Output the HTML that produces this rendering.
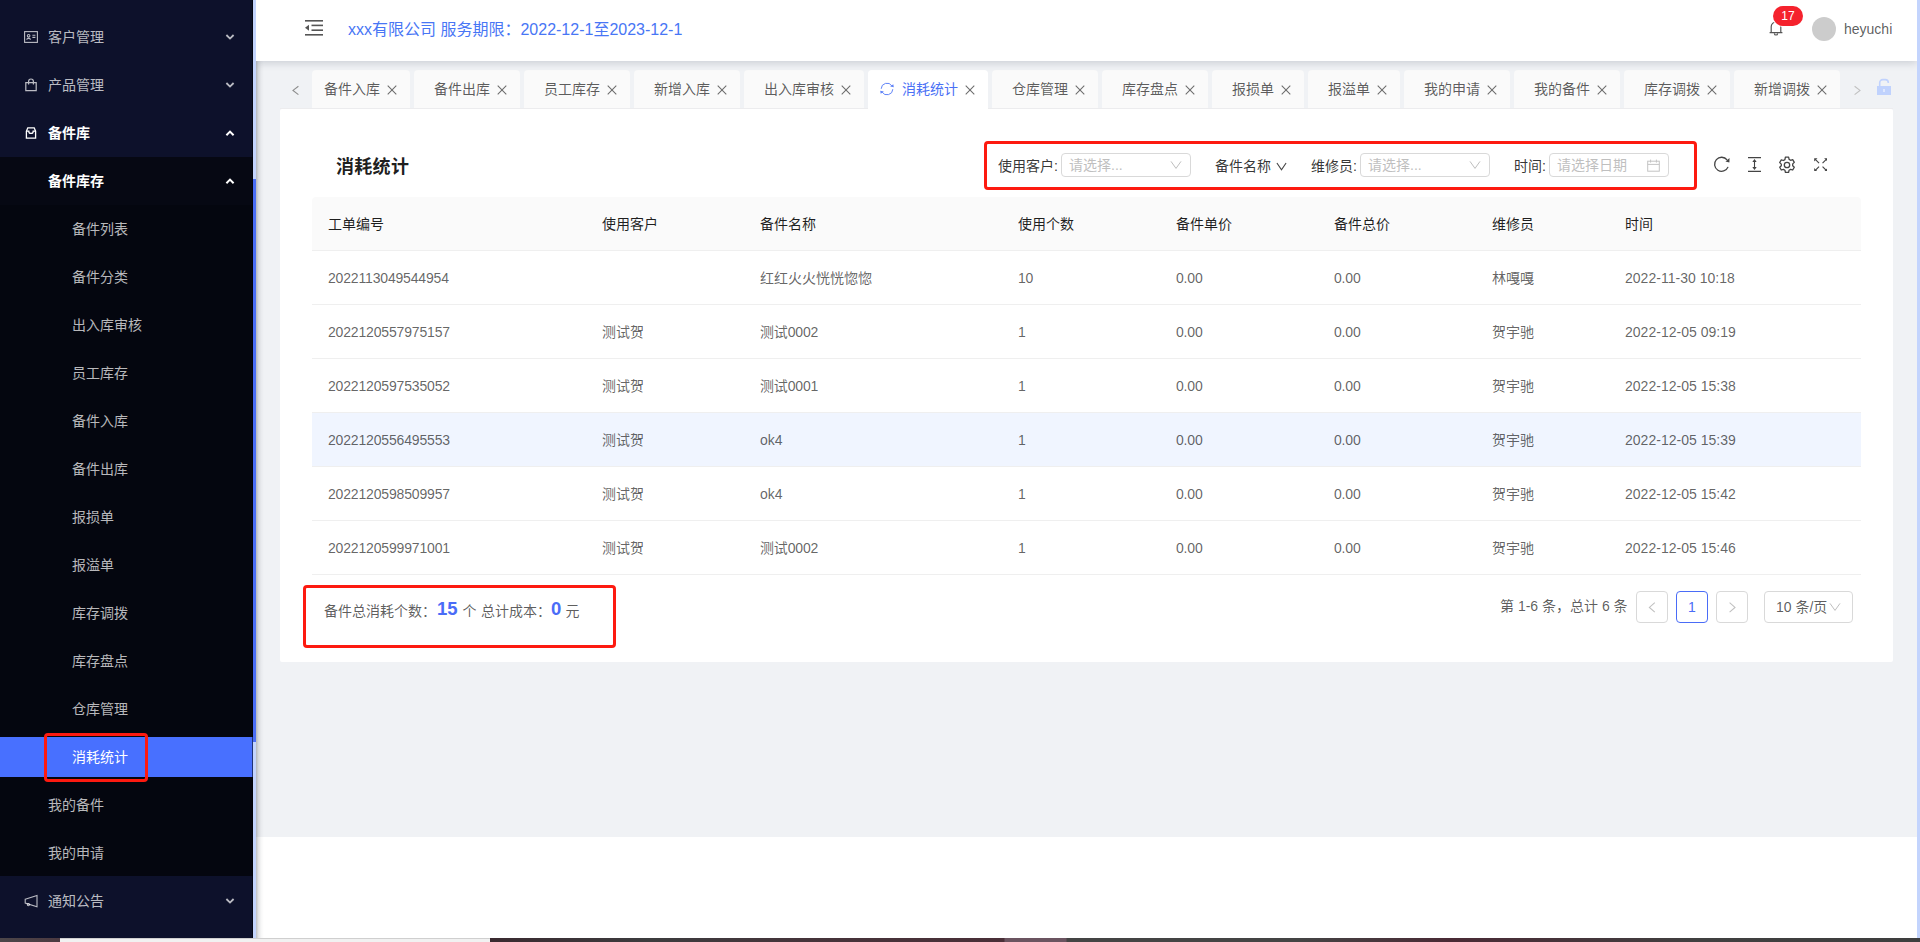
<!DOCTYPE html>
<html lang="zh-CN">
<head>
<meta charset="utf-8">
<title>消耗统计</title>
<style>
*{box-sizing:border-box;margin:0;padding:0}
html,body{width:1920px;height:942px;overflow:hidden;background:#fff}
body{position:relative;font-family:"Liberation Sans","Noto Sans CJK SC",sans-serif;font-size:14px;color:rgba(0,0,0,.65);line-height:1.5715}
.abs{position:absolute}
/* ---------- sidebar ---------- */
#side{position:absolute;left:0;top:0;width:253px;height:938px;background:#0d112b;overflow:hidden}
#side .subbg{position:absolute;left:0;top:157px;width:253px;height:719px;background:#04060f;border-top:48px solid #060813}
#side .mi{position:absolute;left:0;width:253px;height:40px;line-height:40px;color:rgba(255,255,255,.72);font-size:14px;white-space:nowrap}
#side .mi.l1{padding-left:48px}
#side .mi.l2{padding-left:48px}
#side .mi.l3{padding-left:72px}
#side .mi.on{color:#fff;font-weight:700}
#side .mi.sel{background:#4870ff;color:#fff}
#side .mi svg.ic{position:absolute;left:24px;top:13px;width:14px;height:14px}
#side .mi svg.ar{position:absolute;left:225px;top:15px;width:10px;height:10px}
#sedge{position:absolute;left:252px;top:0;width:1px;height:938px;background:rgba(0,0,0,.55)}
#strack{position:absolute;left:253px;top:0;width:3px;height:938px;background:#c3d4fd}
#sthumb{position:absolute;left:253px;top:179px;width:3px;height:563px;background:#4a6ef5}
/* ---------- header ---------- */
#main{position:absolute;left:256px;top:0;width:1661px;height:938px;background:#fff;overflow:hidden}
#gray{position:absolute;left:0;top:61px;width:1661px;height:776px;background:#f0f2f5}
#sshadow{position:absolute;left:0;top:61px;width:8px;height:877px;background:linear-gradient(to right,rgba(0,10,20,.25),rgba(0,10,20,.11) 30%,rgba(0,10,20,.03) 65%,rgba(0,10,20,0))}
#hdr{position:absolute;left:0;top:0;width:1661px;height:61px;background:#fff;box-shadow:0 2px 8px rgba(0,21,41,.16);z-index:5}
#rtrack{position:absolute;left:1917px;top:0;width:3px;height:938px;background:#c3d4fd}
#botstrip{position:absolute;left:0;top:938px;width:1920px;height:4px;background:linear-gradient(to right,#4b4649 0,#4c3a41 60px,#3a2a30 490px,#3c3c3e 650px,#45343a 800px,#4a2f38 1004px,#6b5460 1005px,#6b5460 1066px,#444 1067px,#444 1300px,#4a2a35 1450px,#404040 1700px,#3e3e3e 1920px)}
#botstrip i{position:absolute;left:60px;top:0;width:430px;height:4px;background:#f1f1f1;border-top:1px solid #cfcfcf}

#hdr .fold{position:absolute;left:49px;top:19px;width:18px;height:18px}
#hdr .co{position:absolute;left:92px;top:0;height:59px;line-height:59px;font-size:16px;color:#4876f5;white-space:nowrap}
#hdr .bell{position:absolute;left:1513px;top:20px;width:14px;height:16px}
#hdr .badge{position:absolute;left:1517px;top:6px;width:30px;height:20px;border-radius:10px;background:#f5222d;color:#fff;font-size:12px;line-height:21px;text-align:center;box-shadow:0 0 0 1px #fff}
#hdr .ava{position:absolute;left:1556px;top:17px;width:24px;height:24px;border-radius:50%;background:#ccc}
#hdr .nm{position:absolute;left:1588px;top:0;height:58px;line-height:58px;font-size:14px;color:rgba(0,0,0,.65)}
/* ---------- tabs ---------- */
#tabs{position:absolute;left:0;top:70px;width:1661px;height:39px}
#tabs .line{position:absolute;left:24px;top:38px;width:1613px;height:1px;background:#ececee}
#tabs .tb{position:absolute;top:0;height:38px;line-height:37px;background:#fafafa;border:1px solid #fafafa;border-bottom:0;border-radius:4px 4px 0 0;font-size:14px;color:rgba(0,0,0,.65);white-space:nowrap}
#tabs .tb span{position:absolute;top:0}
#tabs .tb svg.x{position:absolute;top:13px;width:12px;height:12px}
#tabs .tb.act{background:#fff;border-color:#fff;color:#4a70f5;height:39px}
#tabs .tb.act svg.sync{position:absolute;left:11px;top:11px;width:14px;height:14px}
#tabs .nav{position:absolute;top:14px;width:12px;height:12px}
#tabs .lock{position:absolute;left:1621px;top:8px;width:14px;height:17px}

/* ---------- card ---------- */
#card{position:absolute;left:24px;top:109px;width:1613px;height:553px;background:#fff;border-radius:2px}
#card .ttl{position:absolute;left:56px;top:44px;letter-spacing:.3px;font-size:18px;line-height:28px;font-weight:700;color:rgba(0,0,0,.88);white-space:nowrap}
.red{position:absolute;border:3px solid #fd1a10;border-radius:4px;z-index:9;pointer-events:none}
#card .lb{position:absolute;top:45px;height:24px;line-height:24px;font-size:14px;color:rgba(0,0,0,.8);white-space:nowrap}
#card .sel{position:absolute;top:44px;height:24px;border:1px solid #d9d9d9;border-radius:4px;background:#fff;line-height:22px;font-size:14px;color:#bfbfbf;padding-left:7px;white-space:nowrap}
#card .sel svg{position:absolute;top:5px;width:12px;height:12px}
#card .tool{position:absolute}
/* table */
#tbl{position:absolute;left:32px;top:88px;width:1549px}
#tbl .th{position:absolute;left:0;top:0;width:1549px;height:53px;background:#fafafa;border-radius:4px 4px 0 0}
#tbl .hl{position:absolute;left:0;width:1549px;height:1px;background:#efefef}
#tbl .hov{position:absolute;left:0;top:216px;width:1549px;height:53px;background:#f0f5ff}
#tbl .c{position:absolute;height:22px;line-height:22px;font-size:14px;white-space:nowrap;color:rgba(0,0,0,.62)}
#tbl .h{color:rgba(0,0,0,.88)}
#tbl .n{letter-spacing:-0.17px}
#tbl .d{letter-spacing:0.02px}
/* footer */
#sum{position:absolute;left:44px;top:488px;height:26px;width:280px;font-size:14px;color:rgba(0,0,0,.65);white-space:nowrap}
#sum span{position:absolute;top:3px;line-height:22px}
#sum b{position:absolute;top:-1px;line-height:26px;font-size:18.500px;color:#4a6cf7;font-weight:700}
#pg{position:absolute;top:482px;left:0;width:1613px;height:32px;font-size:14px;color:rgba(0,0,0,.65)}
#pg .t{position:absolute;left:1220px;top:0;line-height:30px;white-space:nowrap}
#pg .b{position:absolute;top:0;width:32px;height:32px;border:1px solid #d9d9d9;border-radius:4px;background:#fff;text-align:center;line-height:30px}
#pg .b svg{position:absolute;left:9px;top:9px;width:12px;height:12px}
#pg .b.a{border-color:#4a6cf7;color:#4a6cf7}
#pg .s{position:absolute;left:1484px;top:0;width:89px;height:32px;border:1px solid #d9d9d9;border-radius:4px;background:#fff;line-height:30px;padding-left:11px;white-space:nowrap}
#pg .s svg{position:absolute;left:64px;top:8.500px;width:12px;height:12px}
</style>
</head>
<body>
<div id="side">
  <div class="subbg"></div>
  <div class="mi l1 " style="top:17px"><svg class="ic" viewBox="0 0 14 14" fill="none" stroke="currentColor" stroke-width="1.1"><rect x="0.6" y="1.6" width="12.8" height="10.8"/><circle cx="4.6" cy="5.8" r="1.3"/><path d="M2.6 9.6c.3-1.6 3.7-1.6 4 0M8.4 5.2h3M8.4 7.4h3"/></svg><span>客户管理</span><svg class="ar" viewBox="0 0 10 10" fill="none" stroke="currentColor" stroke-width="1.800"><path d="M1.400 3l3.600 3.600L8.600 3"/></svg></div>
  <div class="mi l1 " style="top:65px"><svg class="ic" viewBox="0 0 14 14" fill="none" stroke="currentColor" stroke-width="1.2"><path d="M1.8 4.6h10.4v8H1.8zM4.6 6.4V3.4a2.4 2.4 0 0 1 4.8 0v3"/></svg><span>产品管理</span><svg class="ar" viewBox="0 0 10 10" fill="none" stroke="currentColor" stroke-width="1.800"><path d="M1.400 3l3.600 3.600L8.600 3"/></svg></div>
  <div class="mi l1 on" style="top:113px"><svg class="ic" viewBox="0 0 14 14" fill="none" stroke="currentColor" stroke-width="1.3"><path d="M2.4 5.2 3.8 1.8h6.4l1.4 3.4v7H2.4z"/><path d="M2.4 5.2h2.4c0 3 4.4 3 4.400 0h2.400"/></svg><span>备件库</span><svg class="ar" viewBox="0 0 10 10" fill="none" stroke="currentColor" stroke-width="2"><path d="M1.400 7.200 5 3.600l3.600 3.600"/></svg></div>
  <div class="mi l2 on" style="top:161px"><span>备件库存</span><svg class="ar" viewBox="0 0 10 10" fill="none" stroke="currentColor" stroke-width="2"><path d="M1.400 7.200 5 3.600l3.600 3.600"/></svg></div>
  <div class="mi l3 " style="top:209px"><span>备件列表</span></div>
  <div class="mi l3 " style="top:257px"><span>备件分类</span></div>
  <div class="mi l3 " style="top:305px"><span>出入库审核</span></div>
  <div class="mi l3 " style="top:353px"><span>员工库存</span></div>
  <div class="mi l3 " style="top:401px"><span>备件入库</span></div>
  <div class="mi l3 " style="top:449px"><span>备件出库</span></div>
  <div class="mi l3 " style="top:497px"><span>报损单</span></div>
  <div class="mi l3 " style="top:545px"><span>报溢单</span></div>
  <div class="mi l3 " style="top:593px"><span>库存调拨</span></div>
  <div class="mi l3 " style="top:641px"><span>库存盘点</span></div>
  <div class="mi l3 " style="top:689px"><span>仓库管理</span></div>
  <div class="mi l3 sel" style="top:737px"><span>消耗统计</span></div>
  <div class="mi l2 " style="top:785px"><span>我的备件</span></div>
  <div class="mi l2 " style="top:833px"><span>我的申请</span></div>
  <div class="mi l1 " style="top:881px"><svg class="ic" viewBox="0 0 14 14" fill="none" stroke="currentColor" stroke-width="1.1"><path d="M1.200 5.200 13 1.400v11.400L1.200 9z"/><circle cx="4.400" cy="10.600" r="1.100"/></svg><span>通知公告</span><svg class="ar" viewBox="0 0 10 10" fill="none" stroke="currentColor" stroke-width="1.800"><path d="M1.400 3l3.600 3.600L8.600 3"/></svg></div>
</div>
<div id="sedge"></div><div id="strack"></div><div id="sthumb"></div>
<div id="main">
  <div id="gray"></div>
  <div id="tabs">
    <div class="line"></div>
    <svg class="nav" style="left:34px" viewBox="0 0 12 12" fill="none" stroke="#8c8c8c" stroke-width="1.1"><path d="M8.400 2.200 3 6.400l5.400 4.200"/></svg>
    <div class="tb" style="left:56px;width:98px"><span style="left:11px">备件入库</span><svg class="x" style="left:73px" viewBox="0 0 12 12" fill="none" stroke="#6c6c6c" stroke-width="1.050"><path d="M1.700 1.700l8.600 8.600M10.300 1.700l-8.600 8.600"/></svg></div>
    <div class="tb" style="left:158px;width:106px"><span style="left:19px">备件出库</span><svg class="x" style="left:81px" viewBox="0 0 12 12" fill="none" stroke="#6c6c6c" stroke-width="1.050"><path d="M1.700 1.700l8.600 8.600M10.300 1.700l-8.600 8.600"/></svg></div>
    <div class="tb" style="left:268px;width:106px"><span style="left:19px">员工库存</span><svg class="x" style="left:81px" viewBox="0 0 12 12" fill="none" stroke="#6c6c6c" stroke-width="1.050"><path d="M1.700 1.700l8.600 8.600M10.300 1.700l-8.600 8.600"/></svg></div>
    <div class="tb" style="left:378px;width:106px"><span style="left:19px">新增入库</span><svg class="x" style="left:81px" viewBox="0 0 12 12" fill="none" stroke="#6c6c6c" stroke-width="1.050"><path d="M1.700 1.700l8.600 8.600M10.300 1.700l-8.600 8.600"/></svg></div>
    <div class="tb" style="left:488px;width:120px"><span style="left:19px">出入库审核</span><svg class="x" style="left:95px" viewBox="0 0 12 12" fill="none" stroke="#6c6c6c" stroke-width="1.050"><path d="M1.700 1.700l8.600 8.600M10.300 1.700l-8.600 8.600"/></svg></div>
    <div class="tb act" style="left:612px;width:120px"><svg class="sync" viewBox="0 0 14 14" fill="none" stroke="#5f83f8" stroke-width="1"><path d="M1.200 6.800A5.800 5.800 0 0 1 11.900 3.900M12.800 7.200A5.800 5.800 0 0 1 2.100 10.100"/><path d="M13.300 2.200l.5 3.100-3.700-.9zM.7 11.800l-.5-3.100 3.700.9z" fill="#5f83f8" stroke="none"/></svg><span style="left:33px">消耗统计</span><svg class="x" style="left:95px" viewBox="0 0 12 12" fill="none" stroke="#6c6c6c" stroke-width="1.050"><path d="M1.700 1.700l8.600 8.600M10.300 1.700l-8.600 8.600"/></svg></div>
    <div class="tb" style="left:736px;width:106px"><span style="left:19px">仓库管理</span><svg class="x" style="left:81px" viewBox="0 0 12 12" fill="none" stroke="#6c6c6c" stroke-width="1.050"><path d="M1.700 1.700l8.600 8.600M10.300 1.700l-8.600 8.600"/></svg></div>
    <div class="tb" style="left:846px;width:106px"><span style="left:19px">库存盘点</span><svg class="x" style="left:81px" viewBox="0 0 12 12" fill="none" stroke="#6c6c6c" stroke-width="1.050"><path d="M1.700 1.700l8.600 8.600M10.300 1.700l-8.600 8.600"/></svg></div>
    <div class="tb" style="left:956px;width:92px"><span style="left:19px">报损单</span><svg class="x" style="left:67px" viewBox="0 0 12 12" fill="none" stroke="#6c6c6c" stroke-width="1.050"><path d="M1.700 1.700l8.600 8.600M10.300 1.700l-8.600 8.600"/></svg></div>
    <div class="tb" style="left:1052px;width:92px"><span style="left:19px">报溢单</span><svg class="x" style="left:67px" viewBox="0 0 12 12" fill="none" stroke="#6c6c6c" stroke-width="1.050"><path d="M1.700 1.700l8.600 8.600M10.300 1.700l-8.600 8.600"/></svg></div>
    <div class="tb" style="left:1148px;width:106px"><span style="left:19px">我的申请</span><svg class="x" style="left:81px" viewBox="0 0 12 12" fill="none" stroke="#6c6c6c" stroke-width="1.050"><path d="M1.700 1.700l8.600 8.600M10.300 1.700l-8.600 8.600"/></svg></div>
    <div class="tb" style="left:1258px;width:106px"><span style="left:19px">我的备件</span><svg class="x" style="left:81px" viewBox="0 0 12 12" fill="none" stroke="#6c6c6c" stroke-width="1.050"><path d="M1.700 1.700l8.600 8.600M10.300 1.700l-8.600 8.600"/></svg></div>
    <div class="tb" style="left:1368px;width:106px"><span style="left:19px">库存调拨</span><svg class="x" style="left:81px" viewBox="0 0 12 12" fill="none" stroke="#6c6c6c" stroke-width="1.050"><path d="M1.700 1.700l8.600 8.600M10.300 1.700l-8.600 8.600"/></svg></div>
    <div class="tb" style="left:1478px;width:106px"><span style="left:19px">新增调拨</span><svg class="x" style="left:81px" viewBox="0 0 12 12" fill="none" stroke="#6c6c6c" stroke-width="1.050"><path d="M1.700 1.700l8.600 8.600M10.300 1.700l-8.600 8.600"/></svg></div>
    <svg class="nav" style="left:1595px" viewBox="0 0 12 12" fill="none" stroke="#c0c0c0" stroke-width="1.1"><path d="M3.600 2.200 9 6.400l-5.400 4.200"/></svg>
    <svg class="lock" viewBox="0 0 14 17"><path d="M2.700 8.500V4.650a3 3 0 0 1 3-3h2.600a3 3 0 0 1 3 3V5" fill="none" stroke="#c0d2fd" stroke-width="1.600"/><path d="M0 8h14v9H0z" fill="#c0d2fd"/><rect x="6" y="11" width="2" height="3" fill="#dfe8fe"/></svg>
  </div>
  <div id="card">
    <div class="ttl">消耗统计</div>
    <div class="lb" style="left:718px">使用客户:</div>
    <div class="sel" style="left:781px;width:130px">请选择...<svg style="left:108px" viewBox="0 0 12 12" fill="none" stroke="#bfbfbf" stroke-width="1"><path d="M1 2.400l5 7 5-7"/></svg></div>
    <div class="lb" style="left:935px">备件名称<svg style="position:absolute;left:61px;top:7px;width:11px;height:11px" viewBox="0 0 12 12" fill="none" stroke="#444" stroke-width="1.2"><path d="M1 2.200l5 7.400 5-7.400"/></svg></div>
    <div class="lb" style="left:1031px">维修员:</div>
    <div class="sel" style="left:1080px;width:130px">请选择...<svg style="left:108px" viewBox="0 0 12 12" fill="none" stroke="#bfbfbf" stroke-width="1"><path d="M1 2.400l5 7 5-7"/></svg></div>
    <div class="lb" style="left:1234px">时间:</div>
    <div class="sel" style="left:1269px;width:120px">请选择日期<svg style="left:97px;top:5px;width:13px;height:13px" viewBox="0 0 13 13" fill="none" stroke="#c4c4c4" stroke-width="1"><rect x="0.700" y="2.200" width="11.600" height="10"/><path d="M0.700 5.400h11.600M3.600 0.600v3M9.400 0.600v3"/></svg></div>
    <svg class="tool" style="left:1433px;top:47px;width:17px;height:17px" viewBox="0 0 17 17" fill="none" stroke="#444" stroke-width="1.3"><path d="M14.100 3.940A7 7 0 1 0 15.090 10.870"/><path d="M12.500 5.400 16.500 2l-.1 4.600z" fill="#444" stroke="none"/></svg>
    <svg class="tool" style="left:1468px;top:47px;width:13px;height:17px" viewBox="0 0 13 17" fill="none" stroke="#444" stroke-width="1.2"><path d="M0 1.600h13M0 15.400h13"/><path d="M6.500 4.500v8" stroke-width="1.100"/><path d="M6.500 2.900 4.300 6.100h4.400zM6.500 14.100 4.300 10.900h4.400z" fill="#444" stroke="none"/></svg>
    <svg class="tool" style="left:1498.250px;top:46.500px;width:18px;height:18px" viewBox="0 0 18 18" fill="none" stroke="#444" stroke-width="1.3"><circle cx="9" cy="9" r="2.700"/><path d="M7.400 1.200h3.200l.5 2.200 1.500.9 2.100-.7 1.600 2.800-1.600 1.500v1.800l1.600 1.500-1.600 2.800-2.100-.7-1.500.9-.5 2.200H7.400l-.5-2.200-1.500-.9-2.100.7-1.600-2.800 1.600-1.500V8.100L1.700 6.600l1.600-2.800 2.100.7 1.500-.9z" stroke-linejoin="round"/></svg>
    <svg class="tool" style="left:1533.500px;top:48.500px;width:13.600px;height:13.600px" viewBox="0 0 14 14" fill="none" stroke="#444" stroke-width="1.200"><path d="M5.200 5.200 1.600 1.600M8.800 5.200l3.600-3.600M5.200 8.800l-3.600 3.600M8.800 8.800l3.600 3.600"/><path d="M.2.200h3.400L.2 3.600zM13.800.2v3.400L10.400.2zM.2 13.800v-3.400l3.400 3.400zM13.800 13.800h-3.400l3.400-3.400z" fill="#444" stroke="none"/></svg>
    <div class="red" style="left:704px;top:32px;width:713px;height:49px"></div>
    <div id="tbl">
      <div class="th"></div><div class="hov"></div>
      <div class="hl" style="top:53px"></div>
      <div class="hl" style="top:107px"></div>
      <div class="hl" style="top:161px"></div>
      <div class="hl" style="top:215px"></div>
      <div class="hl" style="top:269px"></div>
      <div class="hl" style="top:323px"></div>
      <div class="hl" style="top:377px"></div>
      <div class="c h" style="left:16px;top:16px">工单编号</div><div class="c h" style="left:290px;top:16px">使用客户</div><div class="c h" style="left:448px;top:16px">备件名称</div><div class="c h" style="left:706px;top:16px">使用个数</div><div class="c h" style="left:864px;top:16px">备件单价</div><div class="c h" style="left:1022px;top:16px">备件总价</div><div class="c h" style="left:1180px;top:16px">维修员</div><div class="c h" style="left:1313px;top:16px">时间</div>
      <div class="c n" style="left:16px;top:70px">2022113049544954</div><div class="c " style="left:448px;top:70px">红红火火恍恍惚惚</div><div class="c n" style="left:706px;top:70px">10</div><div class="c n" style="left:864px;top:70px">0.00</div><div class="c n" style="left:1022px;top:70px">0.00</div><div class="c " style="left:1180px;top:70px">林嘎嘎</div><div class="c d" style="left:1313px;top:70px">2022-11-30 10:18</div>
      <div class="c n" style="left:16px;top:124px">2022120557975157</div><div class="c " style="left:290px;top:124px">测试贺</div><div class="c n" style="left:448px;top:124px">测试0002</div><div class="c n" style="left:706px;top:124px">1</div><div class="c n" style="left:864px;top:124px">0.00</div><div class="c n" style="left:1022px;top:124px">0.00</div><div class="c " style="left:1180px;top:124px">贺宇驰</div><div class="c d" style="left:1313px;top:124px">2022-12-05 09:19</div>
      <div class="c n" style="left:16px;top:178px">2022120597535052</div><div class="c " style="left:290px;top:178px">测试贺</div><div class="c n" style="left:448px;top:178px">测试0001</div><div class="c n" style="left:706px;top:178px">1</div><div class="c n" style="left:864px;top:178px">0.00</div><div class="c n" style="left:1022px;top:178px">0.00</div><div class="c " style="left:1180px;top:178px">贺宇驰</div><div class="c d" style="left:1313px;top:178px">2022-12-05 15:38</div>
      <div class="c n" style="left:16px;top:232px">2022120556495553</div><div class="c " style="left:290px;top:232px">测试贺</div><div class="c " style="left:448px;top:232px">ok4</div><div class="c n" style="left:706px;top:232px">1</div><div class="c n" style="left:864px;top:232px">0.00</div><div class="c n" style="left:1022px;top:232px">0.00</div><div class="c " style="left:1180px;top:232px">贺宇驰</div><div class="c d" style="left:1313px;top:232px">2022-12-05 15:39</div>
      <div class="c n" style="left:16px;top:286px">2022120598509957</div><div class="c " style="left:290px;top:286px">测试贺</div><div class="c " style="left:448px;top:286px">ok4</div><div class="c n" style="left:706px;top:286px">1</div><div class="c n" style="left:864px;top:286px">0.00</div><div class="c n" style="left:1022px;top:286px">0.00</div><div class="c " style="left:1180px;top:286px">贺宇驰</div><div class="c d" style="left:1313px;top:286px">2022-12-05 15:42</div>
      <div class="c n" style="left:16px;top:340px">2022120599971001</div><div class="c " style="left:290px;top:340px">测试贺</div><div class="c n" style="left:448px;top:340px">测试0002</div><div class="c n" style="left:706px;top:340px">1</div><div class="c n" style="left:864px;top:340px">0.00</div><div class="c n" style="left:1022px;top:340px">0.00</div><div class="c " style="left:1180px;top:340px">贺宇驰</div><div class="c d" style="left:1313px;top:340px">2022-12-05 15:46</div>
    </div>
    <div id="sum"><span style="left:0">备件总消耗个数：</span><b style="left:113px">15</b><span style="left:138.500px">个</span><span style="left:157px">总计成本：</span><b style="left:227px">0</b><span style="left:241.500px">元</span></div>
    <div class="red" style="left:23px;top:476px;width:313px;height:63px"></div>
    <div id="pg"><div class="t">第 1-6 条，总计 6 条</div><div class="b" style="left:1356px"><svg viewBox="0 0 12 12" fill="none" stroke="#c0c0c0" stroke-width="1.1"><path d="M8.800 1.600 3.400 6.400l5.400 4.800"/></svg></div><div class="b a" style="left:1396px">1</div><div class="b" style="left:1436px"><svg viewBox="0 0 12 12" fill="none" stroke="#c0c0c0" stroke-width="1.1"><path d="M3.600 1.600 9 6.400l-5.400 4.800"/></svg></div><div class="s">10 条/页<svg viewBox="0 0 12 12" fill="none" stroke="#bfbfbf" stroke-width="1"><path d="M1 2.400l5 7 5-7"/></svg></div></div>
  </div>
  <div id="sshadow"></div>
  <div id="hdr">
    <svg class="fold" viewBox="0 0 18 18" fill="#555"><rect x="0" y="1" width="18" height="1.6"/><rect x="6.500" y="5.600" width="11.500" height="1.6"/><rect x="6.500" y="10.4" width="11.500" height="1.6"/><rect x="0" y="15" width="18" height="1.6"/><path d="M0 8.800 4 5.800v6z"/></svg>
    <div class="co">xxx有限公司 服务期限：2022-12-1至2023-12-1</div>
    <svg class="bell" viewBox="0 0 14 16" fill="none" stroke="#555" stroke-width="1.2"><path d="M0.600 12.600h12.800M2.200 12.600V6.800a4.800 4.800 0 0 1 9.600 0v5.800M5.400 13.400a1.600 1.600 0 0 0 3.200 0"/></svg>
    <div class="badge">17</div>
    <div class="ava"></div>
    <div class="nm">heyuchi</div>
  </div>
</div>
<div class="red" style="left:44px;top:733px;width:104px;height:49px"></div>
<div id="rtrack"></div>
<div id="botstrip"><i></i></div>
</body>
</html>
